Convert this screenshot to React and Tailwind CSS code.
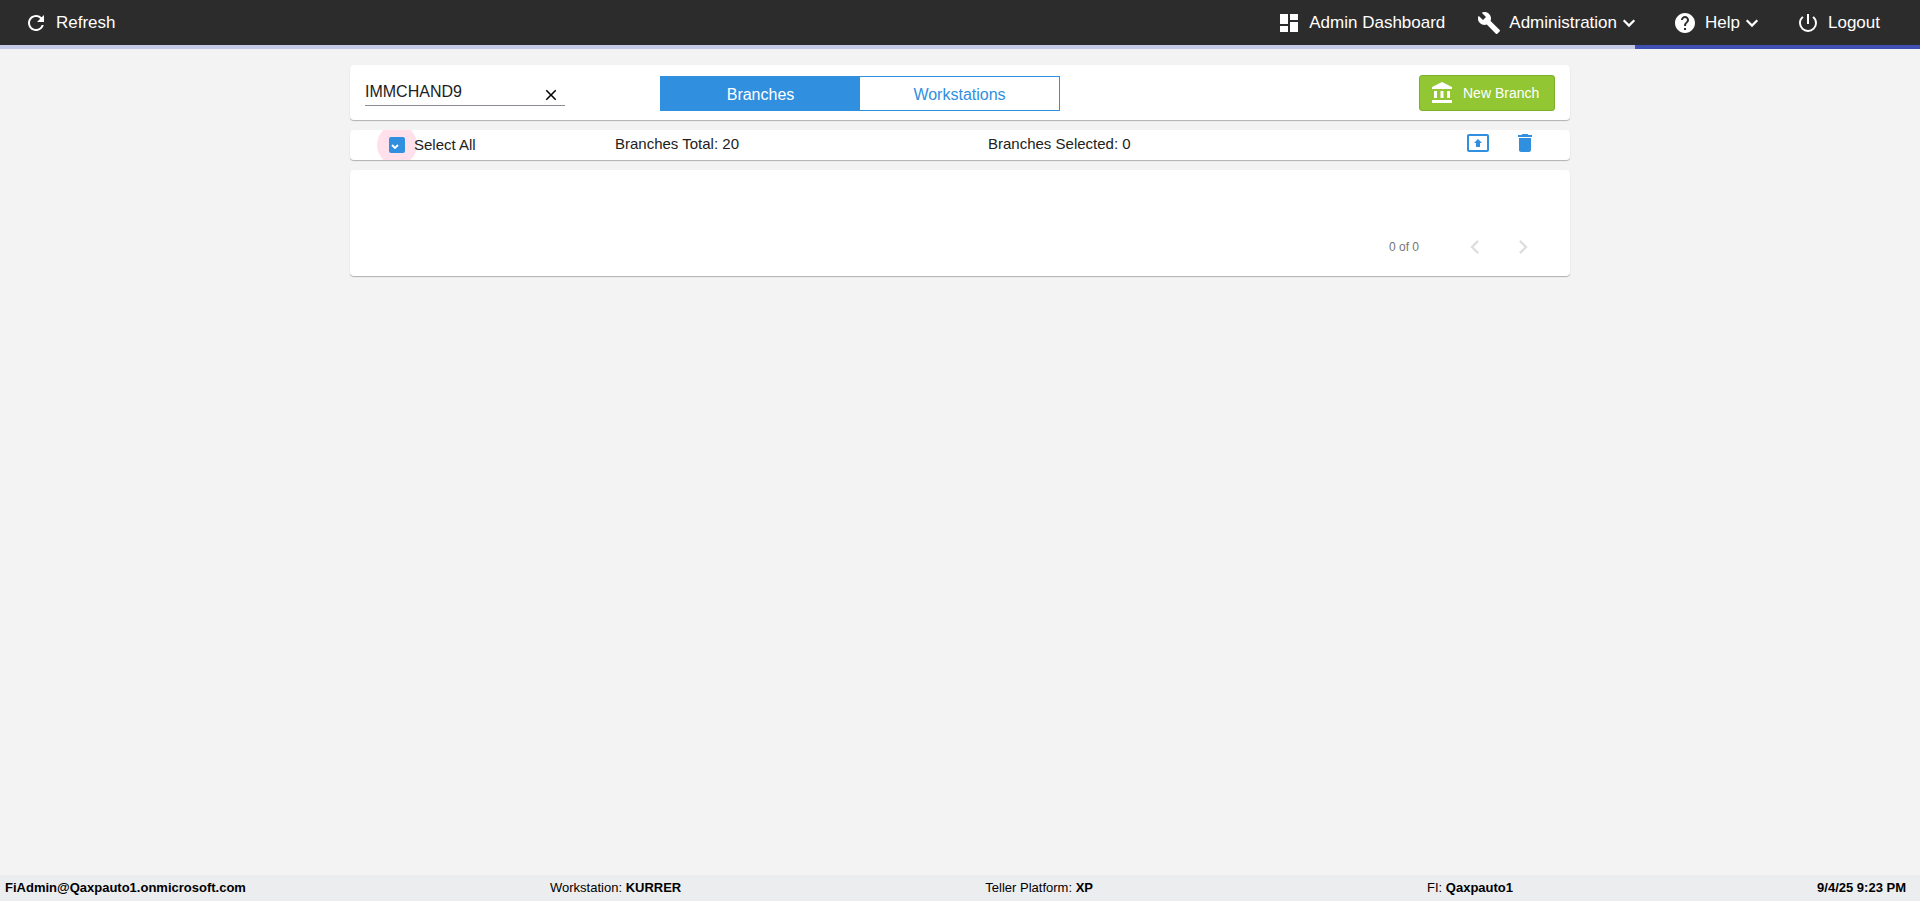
import React, { useState } from 'react';
import {
  MdRefresh,
  MdDashboard,
  MdBuild,
  MdHelp,
  MdPowerSettingsNew,
  MdClose,
  MdAccountBalance,
  MdDelete,
  MdChevronLeft,
  MdChevronRight,
} from 'react-icons/md';

const MenuArrow = () => (
  <svg viewBox="0 0 24 24" className="w-6 h-6" fill="none" stroke="currentColor" strokeWidth="2.2" aria-hidden="true">
    <path d="M6.7 9.3l5.3 5.3 5.3-5.3" />
  </svg>
);

const ExportIcon = () => (
  <svg viewBox="0 0 24 24" className="w-6 h-6" fill="currentColor" aria-hidden="true">
    <path d="M21 3H3c-1.1 0-2 .9-2 2v14c0 1.1.9 2 2 2h18c1.1 0 2-.9 2-2V5c0-1.1-.9-2-2-2zm0 16H3V5h18v14z" />
    <path d="M10 16v-4H8l4-4 4 4h-2v4z" />
  </svg>
);

const NavButton = ({ icon: Icon, label, hasMenu = false }) => (
  <button type="button" aria-haspopup={hasMenu || undefined} className="flex items-center">
    <Icon className="w-6 h-6 mr-2" />
    {label}
    {hasMenu && <MenuArrow />}
  </button>
);

const Card = ({ className = '', children }) => (
  <section className={`bg-white rounded shadow-[0_1px_1px_rgba(0,0,0,0.28)] ${className}`}>
    {children}
  </section>
);

const Header = () => (
  <header>
    <nav className="flex items-center justify-between h-[45px] pl-6 pr-10 bg-[#2c2c2c] text-white text-[17px]">
      <NavButton icon={MdRefresh} label="Refresh" />
      <div className="flex items-center gap-8">
        <NavButton icon={MdDashboard} label="Admin Dashboard" />
        <NavButton icon={MdBuild} label="Administration" hasMenu />
        <NavButton icon={MdHelp} label="Help" hasMenu />
        <NavButton icon={MdPowerSettingsNew} label="Logout" />
      </div>
    </nav>
    {/* Loading bar */}
    <div role="progressbar" aria-label="Loading" className="flex justify-end h-1 bg-[#c5cae9]">
      <div className="w-[285px] bg-[#3f51b5]" />
    </div>
  </header>
);

const Footer = () => (
  <footer className="flex items-center justify-between h-[26px] pl-[5px] pr-[14px] bg-[#ecedef] text-black text-[13px]">
    <b>FiAdmin@Qaxpauto1.onmicrosoft.com</b>
    <span>Workstation: <b>KURRER</b></span>
    <span className="mr-[30px]">Teller Platform: <b>XP</b></span>
    <span>FI: <b>Qaxpauto1</b></span>
    <b>9/4/25 9:23 PM</b>
  </footer>
);

const App = () => {
  const [search, setSearch] = useState('IMMCHAND9');
  const [tab, setTab] = useState('branches');
  const [selectAll, setSelectAll] = useState(true);

  const getTabStyle = (name) =>
    tab === name ? 'bg-[#308fde] text-white' : 'bg-white text-[#308fde]';

  return (
    <div className="flex flex-col min-h-screen bg-[#f3f3f3] text-[#212121] font-['Liberation_Sans',Arial,sans-serif]">
      <Header />

      <main className="flex flex-col flex-1 gap-[10px] w-full max-w-[1220px] mx-auto pt-4">
        {/* Search, view switch, new branch */}
        <Card className="flex items-center h-[55px] px-[15px]">
          <div className="flex items-center w-[200px] h-[27px] border-b border-[#8b8b95]">
            <input
              type="text"
              aria-label="Search branches"
              value={search}
              onChange={(e) => setSearch(e.target.value)}
              className="flex-1 min-w-0 text-base outline-none"
            />
            <button type="button" aria-label="Clear search" onClick={() => setSearch('')} className="mt-1.5 mr-[5px] text-black">
              <MdClose className="w-[18px] h-[18px]" />
            </button>
          </div>

          <div className="flex w-[400px] h-[35px] mt-0.5 ml-[95px] border border-[#308fde] text-base">
            <button type="button" onClick={() => setTab('branches')} className={`flex-1 pt-0.5 ${getTabStyle('branches')}`}>
              Branches
            </button>
            <button type="button" onClick={() => setTab('workstations')} className={`flex-1 pt-0.5 ${getTabStyle('workstations')}`}>
              Workstations
            </button>
          </div>

          <button type="button" className="flex items-center gap-[9px] w-[136px] h-9 ml-auto pl-[10px] rounded-[3px] border border-[#7cb02c] bg-[#92c633] text-white text-sm font-medium">
            <MdAccountBalance className="w-6 h-6" />
            New Branch
          </button>
        </Card>

        {/* Selection bar */}
        <Card className="flex items-center h-[30px] pr-[33px] overflow-hidden text-[15px]">
          <label className="flex items-center w-[265px] pl-[27px]">
            <span className="grid place-items-center w-10 h-10 rounded-full bg-[#ffe0eb]">
              <span className="relative w-4 h-4">
                <input
                  type="checkbox"
                  checked={selectAll}
                  onChange={(e) => setSelectAll(e.target.checked)}
                  className="block w-4 h-4 appearance-none rounded-xs bg-[#308fde]"
                />
                <svg viewBox="0 0 16 16" className="absolute inset-0 w-4 h-4 pointer-events-none" fill="none" stroke="white" strokeWidth="1.8">
                  <path d="M3 8l3 3 3-3" />
                </svg>
              </span>
            </span>
            <span className="-ml-[3px]">Select All</span>
          </label>
          <span className="w-[373px] pb-0.5">Branches Total: 20</span>
          <span className="flex-1 pb-0.5">Branches Selected: 0</span>
          <div className="flex gap-[23px] pb-1 text-[#308fde]">
            <button type="button" aria-label="Export selected">
              <ExportIcon />
            </button>
            <button type="button" aria-label="Delete selected">
              <MdDelete className="w-6 h-6" />
            </button>
          </div>
        </Card>

        {/* Results and paginator */}
        <Card className="flex items-end justify-end h-[106px] pb-[5px] pr-[23px] text-xs text-[#757575]">
          <div className="flex items-center h-12">
            <span className="mr-8">0 of 0</span>
            <button type="button" disabled aria-label="Previous page" className="grid place-items-center w-12 h-12 text-[#dedede]">
              <MdChevronLeft className="w-7 h-7" />
            </button>
            <button type="button" disabled aria-label="Next page" className="grid place-items-center w-12 h-12 text-[#dedede]">
              <MdChevronRight className="w-7 h-7" />
            </button>
          </div>
        </Card>
      </main>

      <Footer />
    </div>
  );
};

export default App;
